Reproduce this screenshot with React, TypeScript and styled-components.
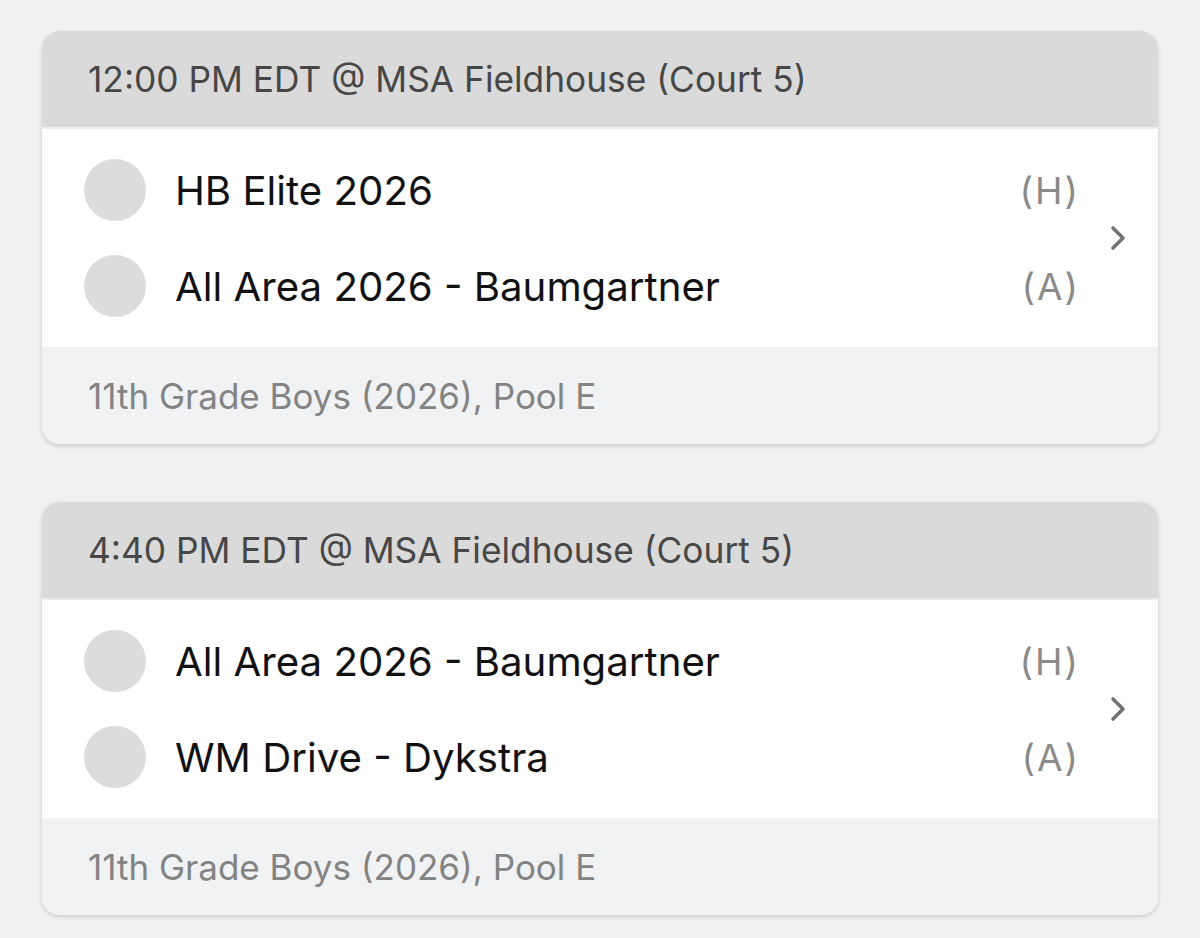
import * as React from "react";
import styled, { createGlobalStyle } from "styled-components";

type Game = {
  time: string;
  venue: string;
  home: string;
  away: string;
  division: string;
};

const games: Game[] = [
  {
    time: "12:00 PM EDT",
    venue: "MSA Fieldhouse (Court 5)",
    home: "HB Elite 2026",
    away: "All Area 2026 - Baumgartner",
    division: "11th Grade Boys (2026), Pool E",
  },
  {
    time: "4:40 PM EDT",
    venue: "MSA Fieldhouse (Court 5)",
    home: "All Area 2026 - Baumgartner",
    away: "WM Drive - Dykstra",
    division: "11th Grade Boys (2026), Pool E",
  },
];

const GlobalStyle = createGlobalStyle`
  body {
    margin: 0;
    background: #f0f1f3;
    font-family: Inter, "Noto Sans", sans-serif;
  }
`;

const Chevron = () => (
  <svg width="20" height="28" viewBox="0 0 20 28" fill="none">
    <path
      d="M5 4 L15 14 L5 24"
      stroke="#737373"
      strokeWidth="3.6"
      strokeLinecap="round"
      strokeLinejoin="round"
    />
  </svg>
);

const App = () => {
  return (
    <>
      <GlobalStyle />
      <Page>
        {games.map((g, i) => (
          <Card key={i}>
            <Header>
              {g.time} @ {g.venue}
            </Header>
            <Body>
              <Teams>
                <TeamRow>
                  <Avatar />
                  <TeamName>{g.home}</TeamName>
                  <Side>(H)</Side>
                </TeamRow>
                <TeamRow>
                  <Avatar />
                  <TeamName>{g.away}</TeamName>
                  <Side>(A)</Side>
                </TeamRow>
              </Teams>
              <Arrow>
                <Chevron />
              </Arrow>
            </Body>
            <Footer>{g.division}</Footer>
          </Card>
        ))}
      </Page>
    </>
  );
};

const Page = styled.div`
  display: flex;
  flex-direction: column;
  gap: 58px;
  padding: 31px 42px;
`;

const Card = styled.div`
  border-radius: 18px;
  overflow: hidden;
  background: #fff;
  box-shadow: 0 2px 4px rgba(0, 0, 0, 0.16);
`;

const Header = styled.div`
  height: 96px;
  display: flex;
  align-items: center;
  padding-left: 46px;
  background: #dadada;
  border-bottom: 2px solid #ececec;
  color: #474747;
  font-size: 35.3px;
`;

const Body = styled.div`
  display: flex;
  align-items: center;
  padding: 13px 0;
`;

const Teams = styled.div`
  flex: 1;
  display: flex;
  flex-direction: column;
`;

const TeamRow = styled.div`
  height: 96px;
  display: flex;
  align-items: center;
  padding-left: 42px;
`;

const Avatar = styled.div`
  width: 62px;
  height: 62px;
  border-radius: 50%;
  background: #dcdcdc;
  margin-right: 29px;
`;

const TeamName = styled.div`
  flex: 1;
  color: #111;
  font-size: 40.2px;
`;

const Side = styled.div`
  color: #8a8a8a;
  font-size: 37px;
  letter-spacing: 2px;
  margin-right: -2px;
`;

const Arrow = styled.div`
  width: 80px;
  display: flex;
  justify-content: center;
`;

const Footer = styled.div`
  height: 97px;
  display: flex;
  align-items: center;
  padding-left: 46px;
  background: #f1f2f4;
  color: #838383;
  font-size: 35px;
`;

export default App;
